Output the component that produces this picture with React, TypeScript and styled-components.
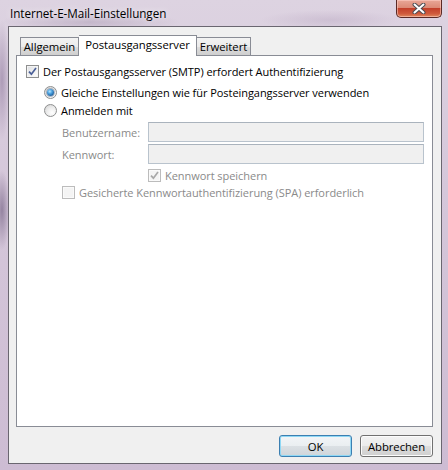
import React from "react";
import styled, { createGlobalStyle, css } from "styled-components";

const GlobalStyle = createGlobalStyle`
  html, body {
    margin: 0;
    padding: 0;
  }
  body {
    width: 448px;
    height: 470px;
    overflow: hidden;
    font-family: "Open Sans", "Noto Sans", sans-serif;
    font-size: 11px;
    letter-spacing: -0.05px;
    color: #000;
  }
`;

const Frame = styled.div`
  width: 448px;
  height: 470px;
  box-sizing: border-box;
  padding: 0 6px 6px 8px;
  display: flex;
  flex-direction: column;
  background:
    radial-gradient(ellipse 90px 10px at 90px 22px, rgba(150, 130, 160, 0.35), transparent),
    radial-gradient(ellipse 70px 10px at 330px 20px, rgba(170, 150, 180, 0.3), transparent),
    radial-gradient(ellipse 8px 40px at 2px 210px, rgba(70, 50, 90, 0.45), transparent),
    radial-gradient(ellipse 8px 60px at 2px 80px, rgba(90, 60, 110, 0.35), transparent),
    linear-gradient(180deg, #ddd3e1 0%, #d5c7da 40%, #cdbcd3 100%);
`;

const TitleBar = styled.div`
  height: 26px;
  display: flex;
  align-items: flex-start;
  justify-content: space-between;
`;

const TitleText = styled.span`
  padding: 5px 0 0 2px;
  font-size: 11.7px;
  line-height: 16px;
  color: #000;
  text-shadow: 0 0 6px rgba(255, 255, 255, 0.9);
`;

const CloseButton = styled.div`
  width: 46px;
  height: 18px;
  box-sizing: border-box;
  border: 1px solid #5b2a25;
  border-top: none;
  border-radius: 0 0 5px 5px;
  background: linear-gradient(180deg, #e9a797 0%, #dc8a76 45%, #c3402a 50%, #cf5a3c 80%, #e08a5e 100%);
  box-shadow: inset 0 0 0 1px rgba(255, 210, 200, 0.55);
  display: flex;
  align-items: center;
  justify-content: center;
`;

const Client = styled.div`
  flex: 1;
  border: 1px solid #6a6670;
  background: #f0f0f0;
  padding: 8px 8px 6px 7px;
  display: flex;
  flex-direction: column;
`;

const TabStrip = styled.div`
  height: 20px;
  padding-left: 4px;
  display: flex;
  align-items: flex-end;
`;

const Tab = styled.div<{ $active?: boolean; $width: number }>`
  width: ${({ $width }) => $width}px;
  box-sizing: border-box;
  border: 1px solid #898c95;
  border-bottom: none;
  display: flex;
  justify-content: center;
  font-size: 11.3px;
  ${({ $active }) =>
    $active
      ? css`
          height: 21px;
          margin-bottom: -1px;
          background: #fff;
          position: relative;
          z-index: 1;
          line-height: 17px;
        `
      : css`
          height: 18px;
          background: linear-gradient(180deg, #f3f3f3 0%, #ebebeb 50%, #dddddd 51%, #cfcfcf 100%);
          line-height: 18px;
          & + & {
            border-left: none;
          }
        `}
`;

const Panel = styled.div`
  height: 372px;
  box-sizing: border-box;
  border: 1px solid #898c95;
  background: #fff;
  padding: 7px 8px 0 9px;
  display: flex;
  flex-direction: column;
`;

const Row = styled.div<{ $indent?: number; $gap?: number; $h?: number }>`
  display: flex;
  align-items: center;
  height: ${({ $h }) => $h ?? 17}px;
  margin-top: ${({ $gap }) => $gap ?? 0}px;
  padding-left: ${({ $indent }) => $indent ?? 0}px;
`;

const Label = styled.span<{ $disabled?: boolean }>`
  margin-left: 4px;
  white-space: nowrap;
  color: ${({ $disabled }) => ($disabled ? "#8a8a8a" : "#000")};
`;

const FieldLabel = styled.span`
  width: 86px;
  flex: none;
  color: #8a8a8a;
  white-space: nowrap;
`;

const TextBox = styled.div`
  flex: 1;
  height: 20px;
  box-sizing: border-box;
  border: 1px solid #b9c3cd;
  border-top-color: #aab3bd;
  background: #f0f0f0;
`;

const BoxShell = styled.span<{ $disabled?: boolean }>`
  width: 13px;
  height: 13px;
  flex: none;
  box-sizing: border-box;
  border: 1px solid ${({ $disabled }) => ($disabled ? "#bcbcbc" : "#8e8f8f")};
  background: ${({ $disabled }) =>
    $disabled ? "#f4f4f4" : "linear-gradient(135deg, #dcdee2 0%, #f2f2f2 60%, #ffffff 100%)"};
  box-shadow: inset 0 0 0 1px ${({ $disabled }) => ($disabled ? "#fafafa" : "#f4f4f4")};
  display: flex;
  align-items: center;
  justify-content: center;
`;

const RadioShell = styled.span`
  width: 13px;
  height: 13px;
  flex: none;
  box-sizing: border-box;
  border-radius: 50%;
  border: 1px solid #8e8f8f;
  background: radial-gradient(circle at 65% 70%, #ffffff 0%, #eeeeee 45%, #cfcfcf 100%);
  display: flex;
  align-items: center;
  justify-content: center;
`;

const RadioDot = styled.span`
  width: 7px;
  height: 7px;
  border-radius: 50%;
  background: radial-gradient(circle at 40% 35%, #b8e6ff 0%, #4da3e0 35%, #1f5f9c 75%, #173f6e 100%);
  box-shadow: 0 0 0 1px rgba(40, 70, 110, 0.35);
`;

const ButtonRow = styled.div`
  margin-top: 8px;
  display: flex;
  justify-content: flex-end;
  gap: 8px;
`;

const PushButton = styled.div<{ $default?: boolean }>`
  width: 73px;
  height: 22px;
  box-sizing: border-box;
  border-radius: 3px;
  border: 1px solid ${({ $default }) => ($default ? "#3c7fb1" : "#707070")};
  background: ${({ $default }) =>
    $default
      ? "linear-gradient(180deg, #f2f5f7 0%, #eaeef1 50%, #dbe0e4 51%, #cfd5da 100%)"
      : "linear-gradient(180deg, #f2f2f2 0%, #ebebeb 50%, #dddddd 51%, #cfcfcf 100%)"};
  box-shadow: inset 0 0 0 1px ${({ $default }) => ($default ? "#8fd8f5" : "#fcfcfc")};
  display: flex;
  align-items: center;
  justify-content: center;
  font-size: 11.3px;
`;

const CheckBox: React.FC<{ checked?: boolean; disabled?: boolean }> = ({ checked, disabled }) => (
  <BoxShell $disabled={disabled}>
    {checked && (
      <svg width="9" height="9" viewBox="0 0 9 9">
        <path
          d="M1 4.6 L3.4 7.2 L8 1"
          fill="none"
          stroke={disabled ? "#a8a8a8" : "#4a5f97"}
          strokeWidth="1.7"
        />
      </svg>
    )}
  </BoxShell>
);

const Radio: React.FC<{ checked?: boolean }> = ({ checked }) => (
  <RadioShell>{checked && <RadioDot />}</RadioShell>
);

export default function App() {
  return (
    <>
      <GlobalStyle />
      <Frame>
        <TitleBar>
          <TitleText>Internet-E-Mail-Einstellungen</TitleText>
          <CloseButton>
            <svg width="14" height="11" viewBox="0 0 14 11">
              <path d="M2.5 1.5 L11.5 9.5 M11.5 1.5 L2.5 9.5" stroke="#4b4c52" strokeWidth="4" strokeLinecap="round" />
              <path d="M2.5 1.5 L11.5 9.5 M11.5 1.5 L2.5 9.5" stroke="#ffffff" strokeWidth="2" strokeLinecap="round" />
            </svg>
          </CloseButton>
        </TitleBar>
        <Client>
          <TabStrip>
            <Tab $width={59}>Allgemein</Tab>
            <Tab $width={118} $active>
              Postausgangsserver
            </Tab>
            <Tab $width={54}>Erweitert</Tab>
          </TabStrip>
          <Panel>
            <Row>
              <CheckBox checked />
              <Label>Der Postausgangsserver (SMTP) erfordert Authentifizierung</Label>
            </Row>
            <Row $indent={18} $gap={4}>
              <Radio checked />
              <Label>Gleiche Einstellungen wie für Posteingangsserver verwenden</Label>
            </Row>
            <Row $indent={18} $gap={1}>
              <Radio />
              <Label>Anmelden mit</Label>
            </Row>
            <Row $indent={36} $gap={3} $h={20}>
              <FieldLabel>Benutzername:</FieldLabel>
              <TextBox />
            </Row>
            <Row $indent={36} $gap={2} $h={20}>
              <FieldLabel>Kennwort:</FieldLabel>
              <TextBox />
            </Row>
            <Row $indent={122} $gap={3}>
              <CheckBox checked disabled />
              <Label $disabled>Kennwort speichern</Label>
            </Row>
            <Row $indent={36}>
              <CheckBox disabled />
              <Label $disabled>Gesicherte Kennwortauthentifizierung (SPA) erforderlich</Label>
            </Row>
          </Panel>
          <ButtonRow>
            <PushButton $default>OK</PushButton>
            <PushButton>Abbrechen</PushButton>
          </ButtonRow>
        </Client>
      </Frame>
    </>
  );
}
